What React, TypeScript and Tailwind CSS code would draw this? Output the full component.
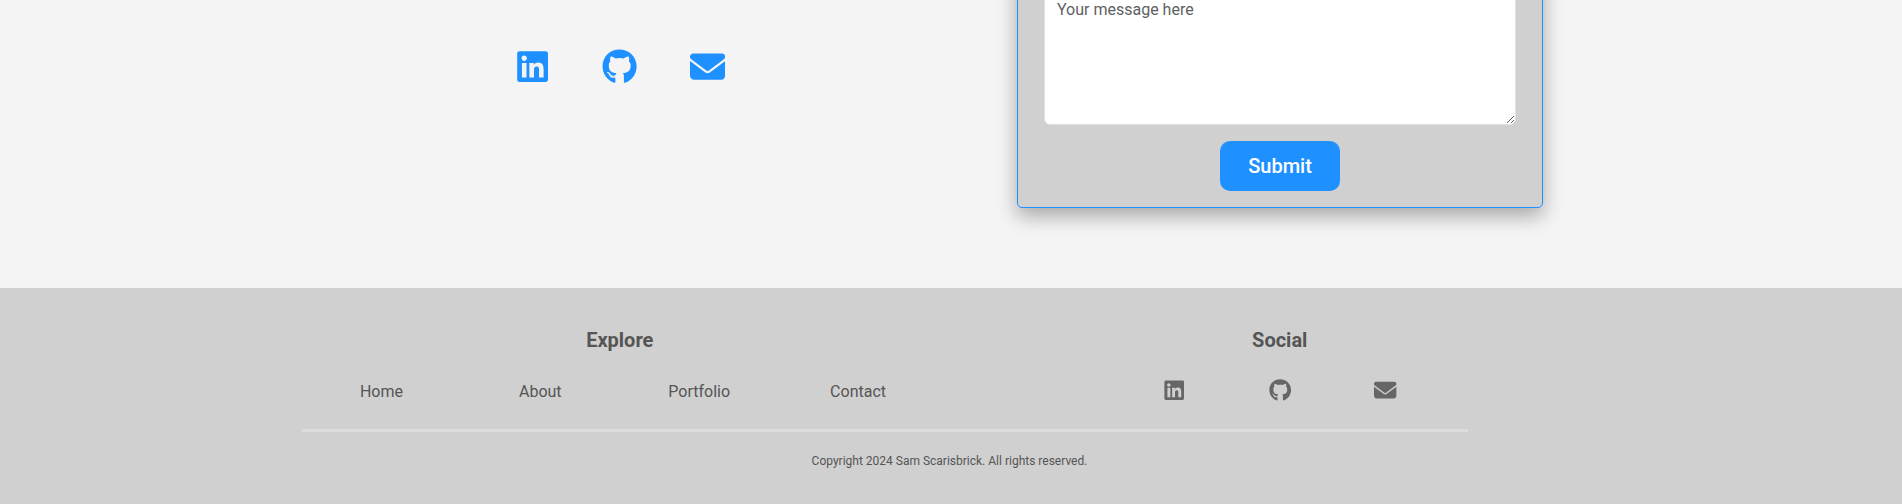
import React from "react";
import { FaLinkedin, FaGithub, FaEnvelope } from "react-icons/fa6";

const links = ["Home", "About", "Portfolio", "Contact"];

export default function App() {
  return (
    <div className="flex h-[504px] flex-col overflow-hidden bg-[#f4f4f4] font-['Roboto',sans-serif] text-[#555]">
      <main className="flex h-[288px] shrink-0 pl-[449px]">
        <div className="mt-[47px] flex h-[40px] w-[342px] items-center justify-center gap-[52.6px] text-[35.2px] text-[#1e90ff]">
          <FaLinkedin />
          <FaGithub />
          <FaEnvelope />
        </div>
        <form className="-mt-[92px] ml-[226px] flex h-[300px] w-[526px] flex-col items-center rounded-[5px] border border-[#1e90ff] bg-[#d0d0d0] px-[26px] shadow-[0_8px_20px_rgba(0,0,0,0.32)]">
          <textarea
            className="mt-[82px] block h-[134px] w-full shrink-0 rounded-[6px] border border-[#dee2e6] bg-white px-3 py-[6px] text-base leading-6 placeholder:text-[#5e6163]"
            placeholder="Your message here"
          />
          <button type="button" className="mt-[16px] h-[50px] w-[120px] shrink-0 rounded-[10px] bg-[#1e90ff] text-[20px] font-medium text-white">
            Submit
          </button>
        </form>
      </main>
      <footer className="h-[216px] shrink-0 bg-[#d0d0d0] px-[302px] pt-[40px]">
        <div className="flex h-[104px] w-[1166px] border-b-[3px] border-[#dcdcdc]">
          <div className="w-[635.5px]">
            <h5 className="text-center text-[20px] font-bold leading-6">Explore</h5>
            <nav className="mt-[28px] grid grid-cols-4 text-center text-base leading-6">
              {links.map((l) => (
                <a key={l}>{l}</a>
              ))}
            </nav>
          </div>
          <div className="ml-[183.5px] w-[317.5px]">
            <h5 className="text-center text-[20px] font-bold leading-6">Social</h5>
            <div className="mt-[27px] grid grid-cols-3 justify-items-center text-[22.4px] text-[#666]">
              <FaLinkedin />
              <FaGithub />
              <FaEnvelope />
            </div>
          </div>
        </div>
        <p className="mt-[20px] w-[1295px] text-center text-[12px] leading-[18px]">Copyright 2024 Sam Scarisbrick. All rights reserved.</p>
      </footer>
    </div>
  );
}
